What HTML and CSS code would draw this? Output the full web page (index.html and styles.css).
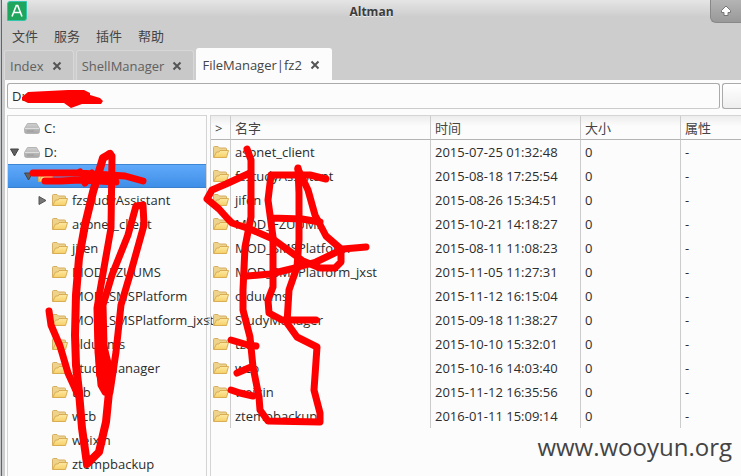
FILE: index.html
```
<!DOCTYPE html>
<html lang="zh-CN">
<head>
<meta charset="utf-8">
<title>Altman</title>
<link rel="stylesheet" href="styles.css">
</head>
<body>
<svg class="defs" aria-hidden="true">
  <defs>
    <linearGradient id="fold" x1="0" y1="0" x2="0" y2="1"><stop offset="0" stop-color="#fde9a4"/><stop offset="1" stop-color="#f6d066"/></linearGradient>
    <linearGradient id="disk" x1="0" y1="0" x2="0" y2="1"><stop offset="0" stop-color="#cfcfcf"/><stop offset="1" stop-color="#a6a6a6"/></linearGradient>
    <symbol id="folder" viewBox="0 0 16 12">
      <path d="M.5 11.5V1.5Q.5.5 1.5.5H5L6.500 2H12.500Q13.500 2 13.500 3V5" fill="#eed38c" stroke="#d6ae63"/>
      <path d="M.7 11.500 3.500 6H6L7 4.500H15.500L13.500 11.500Z" fill="url(#fold)" stroke="#d9ad55"/>
    </symbol>
    <symbol id="drive" viewBox="0 0 16 11">
      <path d="M3.500.5H12.500L15.500 5.500V8.500Q15.500 10.500 13.500 10.500H2.500Q.5 10.500.5 8.500V5.500Z" fill="url(#disk)" stroke="#b4b4b4"/>
      <path d="M1 5.500H15" stroke="#dedede"/>
      <path d="M3 8H10" stroke="#999"/>
    </symbol>
    <symbol id="cross" viewBox="0 0 10 10"><path d="M1.500 1.500 8.500 8.500M8.500 1.500 1.500 8.500" stroke="#555" stroke-width="2"/></symbol>
    <symbol id="down" viewBox="0 0 9 8"><path d="M.5.5H8.500L4.500 7.500Z" fill="#606060" stroke="#454545"/></symbol>
    <symbol id="right" viewBox="0 0 8 9"><path d="M.5.5V8.500L7.500 4.500Z" fill="#777" stroke="#555"/></symbol>
  </defs>
</svg>
<div class="window">
  <header class="titlebar">
    <svg class="logo" viewBox="0 0 20 20" aria-hidden="true"><path d="M3 .5H19.500V17Q19.500 19.500 17 19.500H.5V3Q.5.5 3 .5Z" fill="#1fa65c" stroke="#35c5ad"/><path d="M5 15.500 9.300 4.500H10.700L15 15.500M6.800 11.500H13.200" fill="none" stroke="#fff" stroke-width="1.600"/></svg>
    <h1 class="title">Altman</h1>
    <button class="raise" aria-label="Raise"><svg viewBox="0 0 12 12"><path d="M6 1 10.500 5.500V7.500H8V10.500H4V7.500H1.500V5.500Z" fill="#fff" stroke="#777"/></svg></button>
  </header>
  <nav class="menu"><button>文件</button><button>服务</button><button>插件</button><button>帮助</button></nav>
  <div class="tabs">
    <div class="tab"><button>Index</button><button class="close" aria-label="Close Index"><svg><use href="#cross"/></svg></button></div>
    <div class="tab"><button>ShellManager</button><button class="close" aria-label="Close ShellManager"><svg><use href="#cross"/></svg></button></div>
    <div class="tab active"><button>FileManager|fz2</button><button class="close" aria-label="Close FileManager"><svg><use href="#cross"/></svg></button></div>
  </div>
  <main class="content">
    <form class="address"><input type="text" value="D:" aria-label="Path"><button type="button" class="go" aria-label="Go"></button></form>
    <div class="panes">
      <ul class="tree">
        <li><span class="node"><i class="arrow"></i><svg class="drive"><use href="#drive"/></svg>C:</span></li>
        <li><span class="node"><svg class="arrow"><use href="#down"/></svg><svg class="drive"><use href="#drive"/></svg>D:</span></li>
        <li><span class="node level1 selected"><svg class="arrow"><use href="#down"/></svg><svg class="folder"><use href="#folder"/></svg></span></li>
        <li><span class="node level2"><svg class="arrow"><use href="#right"/></svg><svg class="folder"><use href="#folder"/></svg>fzstudyAssistant</span></li>
        <li><span class="node level2"><i class="arrow"></i><svg class="folder"><use href="#folder"/></svg>aspnet_client</span></li>
        <li><span class="node level2"><i class="arrow"></i><svg class="folder"><use href="#folder"/></svg>jifen</span></li>
        <li><span class="node level2"><i class="arrow"></i><svg class="folder"><use href="#folder"/></svg>MOD_FZUUMS</span></li>
        <li><span class="node level2"><i class="arrow"></i><svg class="folder"><use href="#folder"/></svg>MOD_SMSPlatform</span></li>
        <li><span class="node level2"><i class="arrow"></i><svg class="folder"><use href="#folder"/></svg>MOD_SMSPlatform_jxst</span></li>
        <li><span class="node level2"><i class="arrow"></i><svg class="folder"><use href="#folder"/></svg>olduums</span></li>
        <li><span class="node level2"><i class="arrow"></i><svg class="folder"><use href="#folder"/></svg>StudyManager</span></li>
        <li><span class="node level2"><i class="arrow"></i><svg class="folder"><use href="#folder"/></svg>tzb</span></li>
        <li><span class="node level2"><i class="arrow"></i><svg class="folder"><use href="#folder"/></svg>wcb</span></li>
        <li><span class="node level2"><i class="arrow"></i><svg class="folder"><use href="#folder"/></svg>weixin</span></li>
        <li><span class="node level2"><i class="arrow"></i><svg class="folder"><use href="#folder"/></svg>ztempbackup</span></li>
      </ul>
      <div class="splitter"></div>
      <div class="list">
        <table>
          <colgroup><col class="c-icon"><col class="c-name"><col class="c-time"><col class="c-size"><col></colgroup>
          <thead><tr><th>&gt;</th><th>名字</th><th>时间</th><th>大小</th><th>属性</th></tr></thead>
          <tbody>
            <tr><td><svg class="folder"><use href="#folder"/></svg></td><td>aspnet_client</td><td>2015-07-25 01:32:48</td><td>0</td><td>-</td></tr>
            <tr><td><svg class="folder"><use href="#folder"/></svg></td><td>fzstudyAssistant</td><td>2015-08-18 17:25:54</td><td>0</td><td>-</td></tr>
            <tr><td><svg class="folder"><use href="#folder"/></svg></td><td>jifen</td><td>2015-08-26 15:34:51</td><td>0</td><td>-</td></tr>
            <tr><td><svg class="folder"><use href="#folder"/></svg></td><td>MOD_FZUUMS</td><td>2015-10-21 14:18:27</td><td>0</td><td>-</td></tr>
            <tr><td><svg class="folder"><use href="#folder"/></svg></td><td>MOD_SMSPlatform</td><td>2015-08-11 11:08:23</td><td>0</td><td>-</td></tr>
            <tr><td><svg class="folder"><use href="#folder"/></svg></td><td>MOD_SMSPlatform_jxst</td><td>2015-11-05 11:27:31</td><td>0</td><td>-</td></tr>
            <tr><td><svg class="folder"><use href="#folder"/></svg></td><td>olduums</td><td>2015-11-12 16:15:04</td><td>0</td><td>-</td></tr>
            <tr><td><svg class="folder"><use href="#folder"/></svg></td><td>StudyManager</td><td>2015-09-18 11:38:27</td><td>0</td><td>-</td></tr>
            <tr><td><svg class="folder"><use href="#folder"/></svg></td><td>tzb</td><td>2015-10-10 15:32:01</td><td>0</td><td>-</td></tr>
            <tr><td><svg class="folder"><use href="#folder"/></svg></td><td>wcb</td><td>2015-10-16 14:03:40</td><td>0</td><td>-</td></tr>
            <tr><td><svg class="folder"><use href="#folder"/></svg></td><td>weixin</td><td>2015-11-12 16:35:56</td><td>0</td><td>-</td></tr>
            <tr><td><svg class="folder"><use href="#folder"/></svg></td><td>ztempbackup</td><td>2016-01-11 15:09:14</td><td>0</td><td>-</td></tr>
          </tbody>
        </table>
      </div>
    </div>
  </main>
</div>
<svg class="marks" width="741" height="476" viewBox="0 0 741 476" aria-hidden="true">
  <path class="solid" d="M22 97 28 92 68 90H84L90 93V95L100 98 103 101 101 104H82L71 108 64 103 28 103 22 100Z"/>
  <path d="M33 173H78L110 175 125 176 143 181M45 181H60L80 180 116 182M80 172 85 183 92 173"/>
  <path class="wide" d="M110 154 103 158 93 192 85 225 79 258 76 295 75 335 76 365 79 392 82 428 87 464 99 452 106 422 109 392"/>
  <path d="M109 154 112 156 111 228 105 262 97 308 98 352 101 385 105 392"/>
  <path d="M143 205 136 206 128 235 112 275 103 305 104 345 108 378M143 205 144 225 132 268 121 305 116 352 110 392"/>
  <path class="solid" d="M94 305H105L107 345 114 372 111 395H103L96 375Z"/>
  <path d="M49 311 51 325 60 346 68 373 78 395"/>
  <path d="M247 149 251 160 251 217 245 247 243 290 243 310 250 337 253 367 259 397 260 410 268 421 320 422 320 413 314 390 317 347 297 337 287 323 289 290 297 267 299 240 299 193 298 168"/>
  <path d="M250 173 226 184 212 190 207 199 219 209 228 219 232 223 250 229 273 239 303 261 320 268 335 268 341 262 341 249 326 236 315 215 308 190 298 169"/>
  <path d="M326 179 310 175 271 175 268 200 273 237 273 287 268 300 269 313 282 320 316 320M271 218 302 219 320 222M366 247 343 249 316 262 295 268 270 274 247 276"/>
  <path d="M231 340 248 345 256 346M237 373 251 367M231 390 240 393 253 396"/>
</svg>
<div class="watermark">www.wooyun.org</div>
</body>
</html>
```
FILE: styles.css
```
* { box-sizing: border-box; }
body {
  margin: 0;
  height: 100vh;
  overflow: hidden;
  background: linear-gradient(90deg, #c4c7ca 0 1px, #5f666b 1px 2px, #bdc1c4 2px 5px, #cdcdcd 5px);
  padding-left: 2px;
  color: #2c2c2c;
  font: 13px/24px "Open Sans", "Noto Sans CJK SC", sans-serif;
}
button, input { font: inherit; color: inherit; }
button { border: 0; padding: 0; background: none; }
.defs { position: absolute; width: 0; height: 0; }
.window { display: flex; flex-direction: column; height: 100%; background: #cdcdcd; }
.titlebar {
  display: grid;
  grid-template-columns: 31px 1fr 31px;
  height: 24px;
  background: linear-gradient(#e5e5e5, #cdcdcd 17px);
}
.logo { width: 20px; height: 20px; margin: 1px 0 0 5px; }
.title { margin: 0; font-size: 12px; text-align: center; color: #3c3c3c; text-shadow: 0 1px #eee; }
.raise {
  height: 23px;
  border: 1px solid #888;
  border-width: 0 0 1px 1px;
  border-bottom-left-radius: 6px;
  background: linear-gradient(#b4b4b4, #999);
}
.raise svg { display: block; width: 12px; height: 12px; margin: 0 auto; }
.menu { display: flex; gap: 16px; height: 24px; padding-left: 10px; color: #444; }
.tabs { display: flex; align-items: flex-end; gap: 2px; height: 32px; padding-left: 2px; }
.tab {
  display: flex;
  align-items: center;
  gap: 8px;
  height: 30px;
  padding: 0 11px 0 5px;
  border: 1px solid #d8d8d8;
  border-bottom: 0;
  border-radius: 3px 3px 0 0;
  background: #c8c8c8;
  color: #606060;
}
.tab.active { height: 32px; background: #fcfcfc; border-color: #fcfcfc; color: #444; }
.close svg { display: block; width: 10px; height: 10px; }
.content { flex: 1; min-height: 0; margin-left: 3px; padding: 3px 0 0 2px; background: #fcfcfc; display: flex; flex-direction: column; gap: 6px; }
.address { display: flex; gap: 2px; height: 26px; flex: none; }
.address input {
  flex: 1;
  min-width: 0;
  padding: 0 4px;
  border: 1px solid #aaa;
  border-bottom-color: #ccc;
  border-radius: 3px;
  background: #fcfcfc;
}
.go { width: 19px; border: 1px solid #aaa; border-right: 0; border-radius: 3px 0 0 3px; background: linear-gradient(#fff, #eee); }
.panes { flex: 1; min-height: 0; display: flex; }
.tree {
  width: 200px;
  flex: none;
  margin: 0;
  padding: 0;
  list-style: none;
  border: 1px solid #d4d4d4;
  border-bottom: 0;
}
.node { display: flex; align-items: center; height: 24px; padding-left: 2px; white-space: nowrap; }
.level1 { padding-left: 16px; }
.level2 { padding-left: 30px; }
.selected { background: linear-gradient(#5fa9fa, #3f8fe8); border-top: 1px solid #3f86d4; border-bottom: 1px solid #3b80cc; }
.arrow { width: 9px; height: 9px; margin-right: 5px; flex: none; }
.drive { width: 16px; height: 11px; margin-right: 4px; flex: none; }
.folder { width: 16px; height: 12px; margin-right: 4px; flex: none; }
.splitter {
  width: 3px;
  flex: none;
  background: linear-gradient(#bbb, #bbb) center 202px / 3px 1px no-repeat,
    linear-gradient(#bbb, #bbb) center 205px / 3px 1px no-repeat,
    linear-gradient(#bbb, #bbb) center 208px / 3px 1px no-repeat;
}
.list { flex: 1; min-width: 0; overflow: hidden; border: solid #d4d4d4; border-width: 1px 0 0 1px; }
table { width: 100%; table-layout: fixed; border-collapse: separate; border-spacing: 0; line-height: 22px; }
.c-icon { width: 20px; }
.c-name { width: 200px; }
.c-time { width: 150px; }
.c-size { width: 100px; }
th, td { height: 24px; padding: 0 0 0 4px; border-right: 1px solid #ccc; text-align: left; font-weight: 400; white-space: nowrap; }
th:last-child, td:last-child { border-right: 0; }
th { border-bottom: 1px solid #b4b4b4; background: linear-gradient(#ededed, #fcfcfc 10px); color: #444; }
td:first-child { padding-left: 2px; }
td .folder { display: block; margin: 0; }
.marks { position: absolute; top: 0; left: 0; fill: none; stroke: #f00; stroke-width: 7; stroke-linecap: round; stroke-linejoin: round; pointer-events: none; }
.marks .wide { stroke-width: 8; }
.marks .solid { fill: #f00; stroke: none; }
.watermark { position: absolute; right: 9px; bottom: 12px; font-size: 24px; line-height: 34px; color: #444; }
```
